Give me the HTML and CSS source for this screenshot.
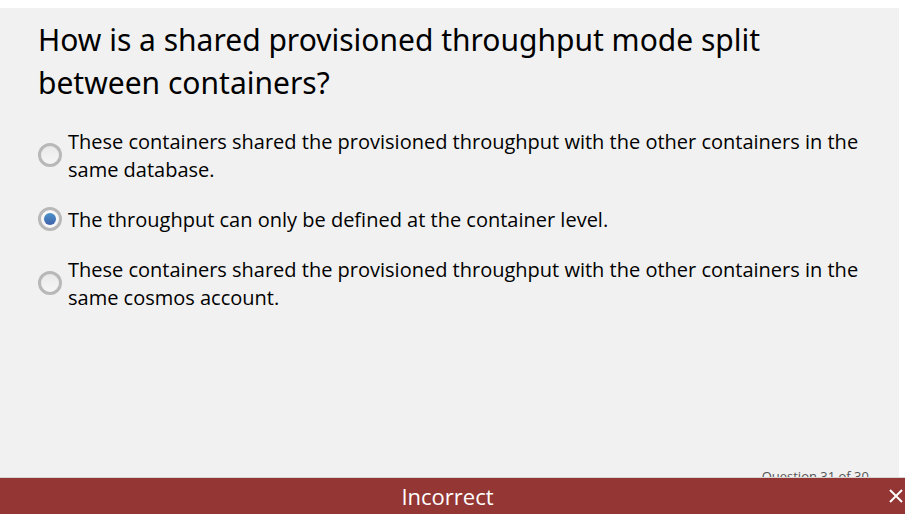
FILE: index.html
```html
<!DOCTYPE html>
<html lang="en">
<head>
<meta charset="utf-8">
<title>Quiz</title>
<link rel="stylesheet" href="styles.css">
</head>
<body>
<main class="slide">
  <form class="quiz">
    <fieldset class="question">
      <legend class="title">How is a shared provisioned throughput mode split between containers?</legend>
      <div class="options">
        <label class="option"><input type="radio" name="answer"><span>These containers shared the provisioned throughput with the other containers in the same database.</span></label>
        <label class="option"><input type="radio" name="answer" checked><span>The throughput can only be defined at the container level.</span></label>
        <label class="option"><input type="radio" name="answer"><span>These containers shared the provisioned throughput with the other containers in the same cosmos account.</span></label>
      </div>
    </fieldset>
  </form>
  <p class="progress">Question 31 of 30</p>
</main>
<footer class="result">
  <span>Incorrect</span>
  <button class="close" type="button" aria-label="Close">
    <svg viewBox="0 0 14 14" width="14" height="14"><path d="M1 1 13 13M13 1 1 13" stroke="#fff" stroke-width="2"/></svg>
  </button>
</footer>
</body>
</html>
```
FILE: styles.css
```css
* { box-sizing: border-box; }
body {
  margin: 0;
  min-height: 100vh;
  display: flex;
  flex-direction: column;
  background: #fff;
  color: #000;
  font-family: "Open Sans", "Noto Sans", sans-serif;
}
.slide {
  flex: 1;
  display: flex;
  flex-direction: column;
  margin: 8px 6px 0 0;
  padding: 10px 38px 0;
  background: #f1f1f1;
}
.quiz { flex: 1; }
.question { margin: 0; padding: 0; border: 0; min-width: 0; }
.title {
  padding: 0;
  font-family: "Noto Sans", "Open Sans", sans-serif;
  font-size: 30px;
  line-height: 43px;
}
.options { display: grid; gap: 22px; margin-top: 24px; }
.option {
  display: grid;
  grid-template-columns: 24px 1fr;
  gap: 6px;
  align-items: center;
  font-size: 20px;
  line-height: 28px;
}
.option input {
  appearance: none;
  width: 24px;
  height: 24px;
  margin: 0 0 2px;
  border: 3px solid #b8b8b8;
  border-radius: 50%;
  background: linear-gradient(#e9e9e9, #f6f6f6);
}
.option input:checked {
  display: grid;
  place-items: center;
  background: #f8f8f8;
}
.option input:checked::before {
  content: "";
  width: 12px;
  height: 12px;
  border-radius: 50%;
  background: linear-gradient(#4b92c8, #4162ab);
}
.progress {
  height: 10px;
  margin: 0 -8px 0 0;
  text-align: right;
  font-size: 13px;
  line-height: 16px;
  color: #555;
}
.result {
  position: relative;
  display: flex;
  justify-content: center;
  margin-bottom: 1px;
  padding: 0 10px 0 0;
  background: #943634;
  box-shadow: 0 -1px 0 #d8d4d4;
  color: #fff;
  font-size: 22px;
  line-height: 36px;
}
.close {
  position: absolute;
  right: 2px;
  top: 11px;
  display: flex;
  padding: 0;
  border: 0;
  background: none;
}
```
